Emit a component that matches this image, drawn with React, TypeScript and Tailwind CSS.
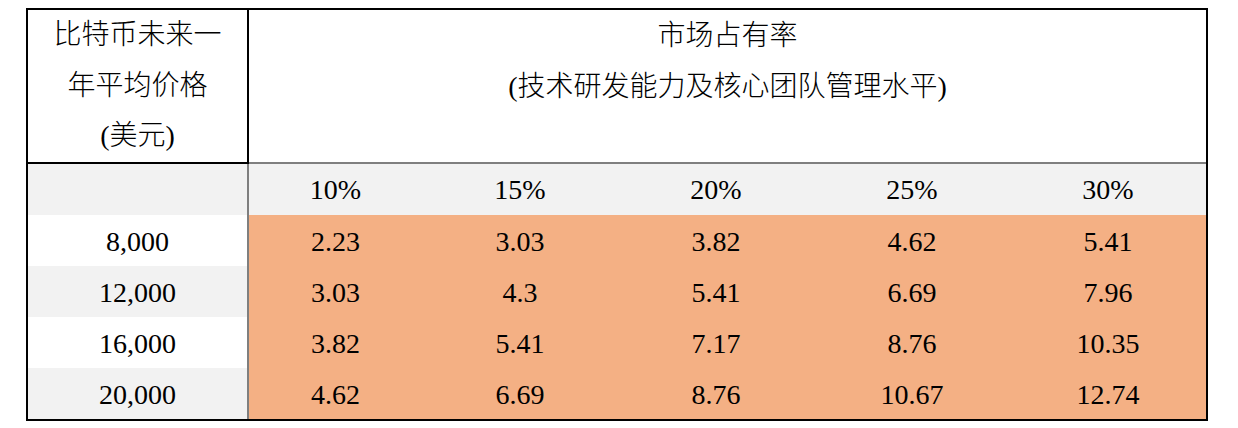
const rates = ['10%', '15%', '20%', '25%', '30%']

const rows = [
  { price: '8,000', values: ['2.23', '3.03', '3.82', '4.62', '5.41'] },
  { price: '12,000', values: ['3.03', '4.3', '5.41', '6.69', '7.96'] },
  { price: '16,000', values: ['3.82', '5.41', '7.17', '8.76', '10.35'] },
  { price: '20,000', values: ['4.62', '6.69', '8.76', '10.67', '12.74'] },
]

// first rate column is narrower than the rest
const colWidths = ['w-[173px]', 'w-[196px]', 'w-[196px]', 'w-[196px]', 'w-[196px]']

export default function App() {
  return (
    <div className="min-h-screen bg-white pt-[8px] pl-[26px]">
      <div
        className="w-[1182px] border-2 border-black text-[28px] text-black"
        style={{ fontFamily: '"Liberation Serif", "Noto Sans CJK SC", serif' }}
      >
        {/* Header */}
        <div className="flex h-[154px]">
          <div className="w-[221px] shrink-0 border-r-2 border-b-2 border-black text-center leading-[50.7px] font-light">
            比特币未来一
            <br />
            年平均价格
            <br />
            (美元)
          </div>
          <div className="flex-1 border-b-2 border-[#7f7f7f] text-center leading-[51px] font-light">
            市场占有率
            <br />
            (技术研发能力及核心团队管理水平)
          </div>
        </div>

        {/* Rates */}
        <div className="flex h-[51px] bg-[#f2f2f2]">
          <div className="w-[221px] shrink-0 border-r-2 border-[#7f7f7f]" />
          {rates.map((r, i) => (
            <div key={r} className={`${colWidths[i]} flex items-center justify-center pt-[1px]`}>
              {r}
            </div>
          ))}
        </div>

        {/* Values */}
        {rows.map((row, i) => (
          <div key={row.price} className="flex h-[51px]">
            <div
              className={`w-[221px] shrink-0 border-r-2 border-[#7f7f7f] flex items-center justify-center pt-[3px] ${
                i % 2 === 1 ? 'bg-[#f2f2f2]' : 'bg-white'
              }`}
            >
              {row.price}
            </div>
            {row.values.map((v, j) => (
              <div key={j} className={`${colWidths[j]} flex items-center justify-center pt-[3px] bg-[#f4b084]`}>
                {v}
              </div>
            ))}
          </div>
        ))}
      </div>
    </div>
  )
}
